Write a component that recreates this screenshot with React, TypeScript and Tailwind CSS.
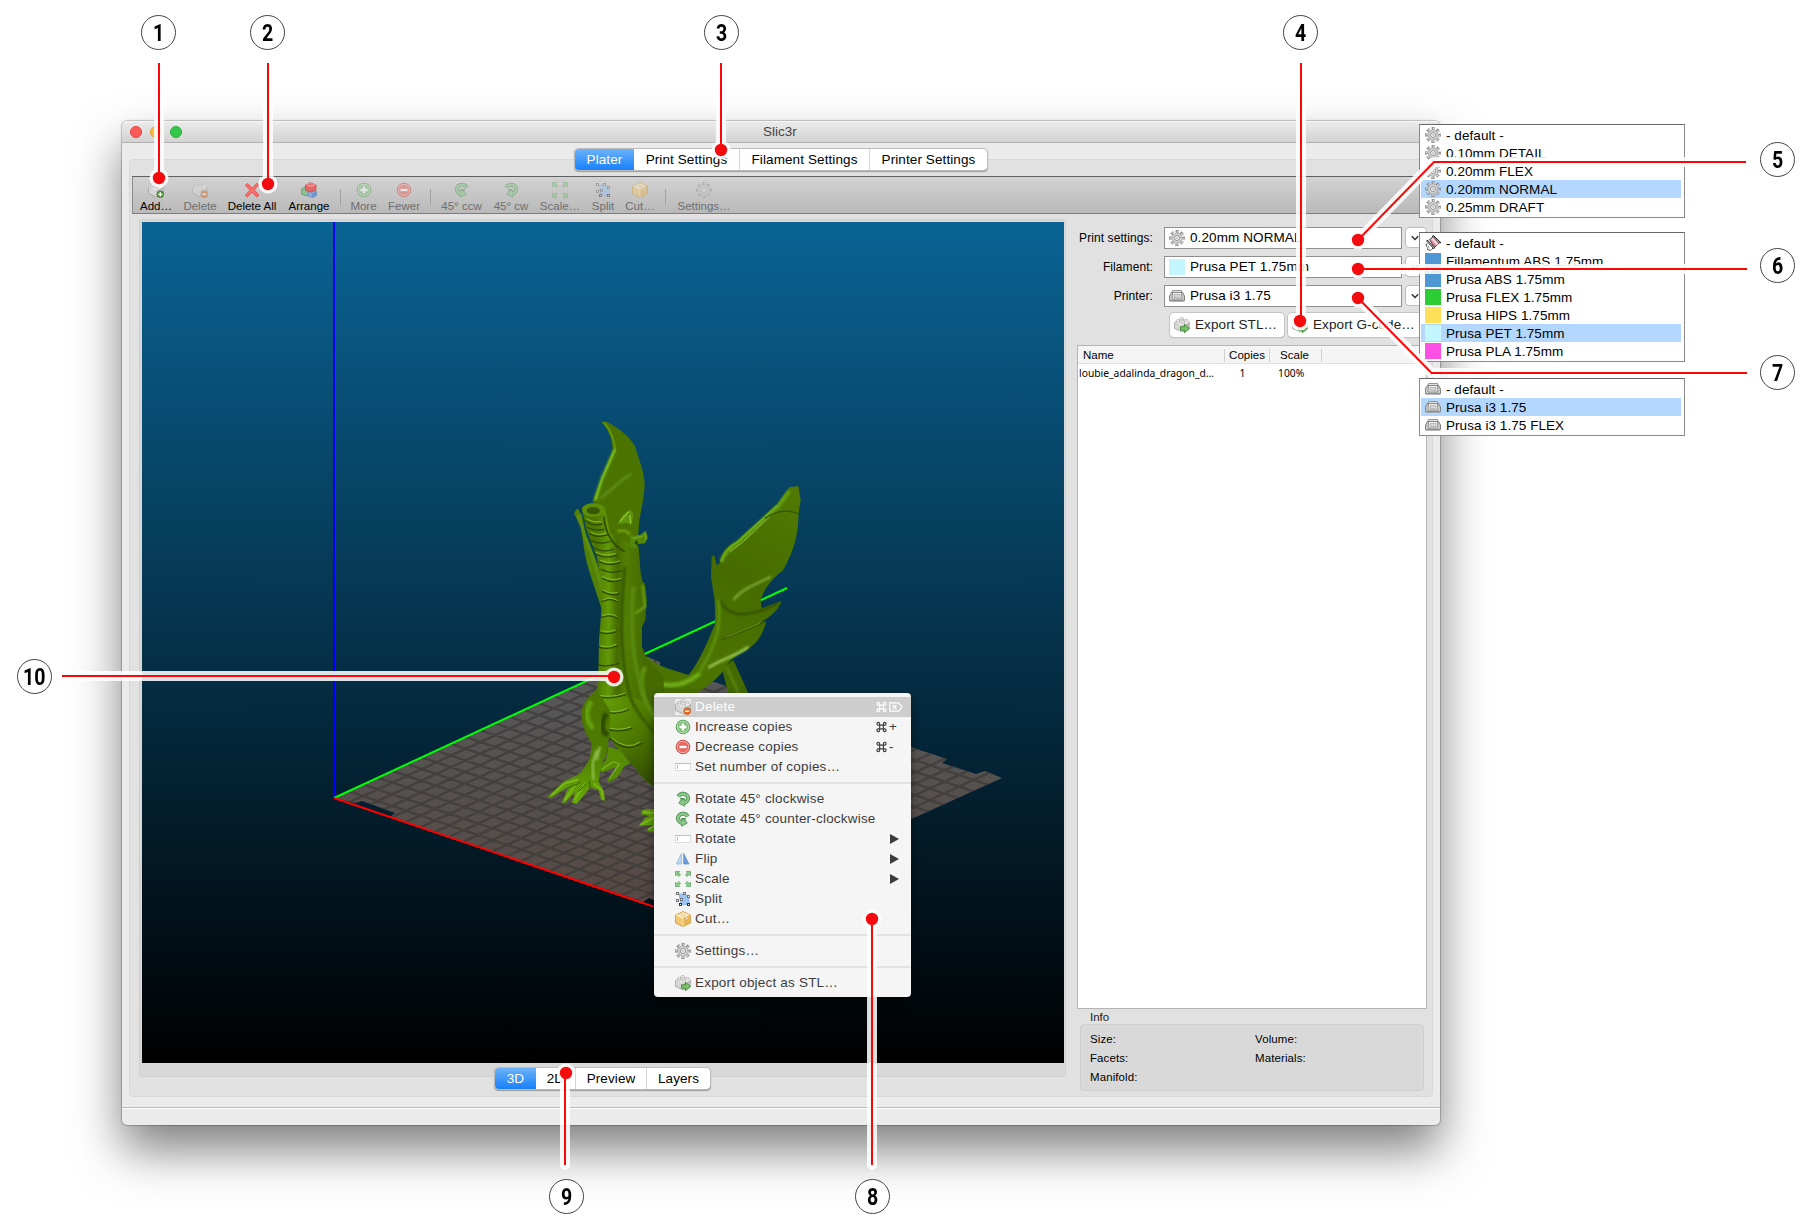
import React from "react";

type IconProps = { className?: string };

const Brick = ({
  top = "#f6f6f6",
  left = "#d6d6d6",
  right = "#bcbcbc",
  badge,
  className = "",
}: {
  top?: string;
  left?: string;
  right?: string;
  badge?: "plus" | "minus" | "arrow";
  className?: string;
}) => (
  <svg viewBox="0 0 16 16" className={"block size-4 shrink-0 " + className}>
    <path d="M0.5 5.5 L6 2.8 L15.5 5 L15.5 11.5 L8.5 15 L0.5 11.5Z" fill={left} stroke="#9a9a9a" strokeWidth=".7" />
    <path d="M8.5 8.2 L15.5 5 L15.5 11.5 L8.5 15Z" fill={right} />
    <path d="M0.5 5.3 L7 2 L15.5 5 L8.5 8.2Z" fill={top} />
    <g fill={top} stroke="#a5a5a5" strokeWidth=".6">
      <path d="M2.2 3.6v1.6c0 1.3 3.6 1.3 3.6 0V3.6z" />
      <ellipse cx="4" cy="3.5" rx="1.8" ry="1" />
      <path d="M6 1.6v1.6c0 1.3 3.6 1.3 3.6 0V1.6z" />
      <ellipse cx="7.8" cy="1.5" rx="1.8" ry="1" />
      <path d="M7 4.6v1.6c0 1.3 3.6 1.3 3.6 0V4.6z" />
      <ellipse cx="8.8" cy="4.6" rx="1.8" ry="1" />
      <ellipse cx="12.3" cy="3.3" rx="1.8" ry="1" />
    </g>
    {badge === "plus" && (
      <g>
        <circle cx="12.3" cy="12.3" r="3.4" fill="#4f9a33" stroke="#34721f" strokeWidth=".6" />
        <path d="M10.2 12.3h4.2M12.3 10.2v4.2" stroke="#fff" strokeWidth="1.3" />
      </g>
    )}
    {badge === "minus" && (
      <g>
        <circle cx="12.3" cy="12.3" r="3.4" fill="#e0702c" stroke="#b9501a" strokeWidth=".6" />
        <path d="M10.2 12.3h4.2" stroke="#fff" strokeWidth="1.3" />
      </g>
    )}
    {badge === "arrow" && (
      <path d="M6.5 9.8h4V7.3l5 4.2-5 4.2v-2.4h-4z" fill="#7cc068" stroke="#3f8a35" strokeWidth=".9" />
    )}
  </svg>
);

const Arrange = () => (
  <svg viewBox="0 0 16 16" className="block size-4">
    <path d="M0.5 7 L4 5 L8 7 V12.5 L4.5 14 L0.5 12Z" fill="#8dbd90" stroke="#5a9a64" strokeWidth=".7" />
    <path d="M7 9.5 L11 7.8 L15.5 9.5 V13.5 L11 15.7 L7 13.8Z" fill="#8db0dd" stroke="#5c84b8" strokeWidth=".7" />
    <path d="M11 11.5l4.5-2v4L11 15.7z" fill="#6d95ca" />
    <path d="M4.5 3 L10 1.2 L15 3 V8 L10 10.3 L4.5 8Z" fill="#e66868" stroke="#ba4444" strokeWidth=".7" />
    <path d="M4.5 3L10 1.2 15 3 10 5z" fill="#f49a9a" />
    <ellipse cx="9.8" cy="1.9" rx="2.2" ry="1.2" fill="#f28a8a" stroke="#c95050" strokeWidth=".5" />
  </svg>
);

const Cross = () => (
  <svg viewBox="0 0 16 16" className="block size-4">
    <path d="M3.5 3.5L13 13M12.8 3.2L3.3 13.2" stroke="#e04848" strokeWidth="3.4" strokeLinecap="square" />
    <path d="M3.5 3.5L13 13M12.8 3.2L3.3 13.2" stroke="#fb706a" strokeWidth="2.2" strokeLinecap="square" />
  </svg>
);

const PlusCircle = () => (
  <svg viewBox="0 0 16 16" className="block size-4">
    <circle cx="8" cy="8" r="6.8" fill="#7fbf79" stroke="#4b9a4b" strokeWidth=".9" />
    <circle cx="8" cy="8" r="5.7" fill="none" stroke="#c5e6c0" strokeWidth=".9" />
    <path d="M4.4 8h7.2M8 4.4v7.2" stroke="#fff" strokeWidth="2.4" />
  </svg>
);

const MinusCircle = () => (
  <svg viewBox="0 0 16 16" className="block size-4">
    <circle cx="8" cy="8" r="6.8" fill="#e8685f" stroke="#c4403a" strokeWidth=".9" />
    <circle cx="8" cy="8" r="5.7" fill="none" stroke="#f7b7b0" strokeWidth=".9" />
    <path d="M4.4 8h7.2" stroke="#fff" strokeWidth="2.4" />
  </svg>
);

const RotateCw = ({ className = "" }: IconProps) => (
  <svg viewBox="0 0 16 16" className={"block size-4 " + className}>
    <path d="M3.4 5.6A5 4.6 0 1 1 9 11.8" fill="none" stroke="#4c9150" strokeWidth="4" />
    <path d="M9.6 7.6v7.6L3.8 12.2 5.4 9.6z" fill="#8cc58b" stroke="#4c9150" strokeWidth=".8" />
    <path d="M3.4 5.6A5 4.6 0 1 1 9 11.8" fill="none" stroke="#8cc58b" strokeWidth="2.5" />
    <path d="M5.2 7.8h3.6" stroke="#4c9150" strokeWidth="1.6" />
  </svg>
);

const ScaleIcon = () => (
  <svg viewBox="0 0 16 16" className="block size-4" fill="#8bc98a" stroke="#58a45c" strokeWidth=".7">
    <path d="M.5.5h4.3L3.6 1.7 5.6 3.7 3.8 5.5 1.8 3.5.5 4.8z" />
    <path d="M.5.5h4.3L3.6 1.7 5.6 3.7 3.8 5.5 1.8 3.5.5 4.8z" transform="matrix(-1 0 0 1 16 0)" />
    <path d="M.5.5h4.3L3.6 1.7 5.6 3.7 3.8 5.5 1.8 3.5.5 4.8z" transform="matrix(1 0 0 -1 0 16)" />
    <path d="M.5.5h4.3L3.6 1.7 5.6 3.7 3.8 5.5 1.8 3.5.5 4.8z" transform="matrix(-1 0 0 -1 16 16)" />
  </svg>
);

const SplitIcon = () => (
  <svg viewBox="0 0 16 16" className="block size-4">
    <path d="M4 3h6l4 3v7.500H6z" fill="#9cc3f2" stroke="#7aa7df" strokeWidth=".7" />
    <g fill="#fff" stroke="#666" strokeWidth=".9">
      <rect x="1.500" y="1.500" width="2" height="2" />
      <rect x="8.500" y="1.500" width="2" height="2" />
      <rect x="12.500" y="4.500" width="2" height="2" />
      <rect x="1.500" y="8.500" width="2" height="2" />
      <rect x="5.500" y="7.500" width="2" height="2" />
      <rect x="4.500" y="12.500" width="2" height="2" stroke="#222" />
      <rect x="12.500" y="12.500" width="2" height="2" stroke="#222" />
    </g>
  </svg>
);

const Box = () => (
  <svg viewBox="0 0 16 16" className="block size-4">
    <path d="M8 .6L15.400 4v8L8 15.500.6 12V4z" fill="#f3c873" stroke="#cb973e" strokeWidth=".9" />
    <path d="M8 .9L15 4 8 7.300 1 4z" fill="#fde9b5" />
    <path d="M8 7.300L15 4v7.800L8 15.200z" fill="#e9b455" />
    <path d="M3.500 2.900l7.500 3.300v3l1.500-.7v-3L5.200 2.200z" fill="#f9f3df" stroke="#c9a35a" strokeWidth=".4" />
    <path d="M1 4l7 3.300v8" fill="none" stroke="#fff3cf" strokeWidth=".7" />
  </svg>
);

const Gear = () => (
  <svg viewBox="0 0 16 16" className="block size-4 shrink-0">
    <circle cx="8" cy="8" r="6.600" fill="none" stroke="#8a8a8a" strokeWidth="2.600" strokeDasharray="3.200 1.984" strokeDashoffset="1.600" />
    <circle cx="8" cy="8" r="6.200" fill="none" stroke="#cdcdcd" strokeWidth="2" strokeDasharray="1.900 2.970" strokeDashoffset=".95" />
    <circle cx="8" cy="8" r="5.100" fill="#cbcbcb" stroke="#979797" strokeWidth=".7" />
    <circle cx="8" cy="8" r="4.400" fill="#d0d0d0" />
    <circle cx="8" cy="8" r="2.500" fill="#f4f4f4" stroke="#8f8f8f" strokeWidth=".9" />
    <circle cx="8" cy="8" r="1.100" fill="#c4c4c4" />
  </svg>
);

const Printer = () => (
  <svg viewBox="0 0 16 16" className="block size-4 shrink-0">
    <path d="M3.500 2.500h9l1.500 3.500H2z" fill="#e2e2e2" stroke="#8a8a8a" strokeWidth=".9" />
    <path d="M2.500 4.500h11l2 3.500v4.500H.5V8z" fill="#cfcfcf" stroke="#777" strokeWidth=".9" />
    <path d="M3.500 4.500h9l.5 6.500H3z" fill="#f3f3f3" stroke="#777" strokeWidth=".8" />
    <path d="M5 6.500h6v3H5z" fill="#d6d6d6" stroke="#999" strokeWidth=".6" />
    <path d="M.6 12.500h14.800v1.200H.6z" fill="#999" />
  </svg>
);

const Spool = () => (
  <svg viewBox="0 0 16 16" className="block size-4 shrink-0">
    <path d="M4.500 4.500L9 1l5.500 6.500-5 5z" fill="#e58aa0" stroke="#222" strokeWidth=".8" />
    <path d="M7 3.500l5.500 6" stroke="#fbd3dc" strokeWidth="2.200" />
    <path d="M7.500.7l8 7.300M1.800 5.300l7.500 8.200" stroke="#111" strokeWidth="1.800" />
    <path d="M7.800 1.400l7 6.200M2.300 6l6.600 6.900" stroke="#fff" strokeWidth=".7" />
    <path d="M2 8.500L.8 10.500l2.500 1.200-.8 3 3.500.6 2-2.300" fill="none" stroke="#111" strokeDasharray="1.500 .8" />
  </svg>
);

const Field = () => (
  <svg viewBox="0 0 16 16" className="block size-4">
    <path d="M.5 4.500h15v7H.5z" fill="#fff" stroke="#dcdcdc" />
    <path d="M0 4.500h16" stroke="#bfbfbf" />
    <path d="M2.500 6v4" stroke="#bbb" />
  </svg>
);

const FlipIcon = () => (
  <svg viewBox="0 0 16 16" className="block size-4">
    <path d="M6.500 2.500v10.500H1.300z" fill="#bcd5f0" stroke="#93b6de" strokeWidth=".7" />
    <path d="M8.700 2.500v10.500h5.200z" fill="#6c9ed9" stroke="#5286c6" strokeWidth=".7" />
  </svg>
);

const ForwardDelete = () => (
  <svg viewBox="0 0 14 10" className="h-[10px] w-[14px]" fill="none" stroke="#fff" strokeWidth="1.200">
    <path d="M.8.8h8.700L13.200 5 9.500 9.200H.8zM3.500 3l4 4M7.500 3l-4 4" />
  </svg>
);

function Segmented({ items }: { items: { label: string; w: string }[] }) {
  return (
    <div className="flex h-[21px] overflow-hidden rounded-[4px] bg-white text-[13.5px] leading-[21px] tracking-[0.1px] text-black shadow-[0_0_0_1px_#bdbdbd,0_1px_1px_0.5px_#999]">
      {items.map((it, i) => (
        <div
          key={it.label}
          className={
            it.w +
            " text-center " +
            (i === 0
              ? "bg-linear-to-b/srgb from-[#6cb3fa] to-[#1680fb] text-white"
              : i > 1
                ? "border-l border-[#d5d5d5]"
                : "")
          }
        >
          {it.label}
        </div>
      ))}
    </div>
  );
}

function Tool({ w, label, off, children }: { w: string; label: string; off?: boolean; children: React.ReactNode }) {
  return (
    <div className={w + " flex shrink-0 flex-col items-center pt-[5px]"}>
      <div className={off ? "opacity-50" : ""}>{children}</div>
      <div className={"mt-px text-[11.5px] leading-[14px] whitespace-nowrap " + (off ? "text-[#6e6e6e]" : "text-black")}>
        {label}
      </div>
    </div>
  );
}

const ToolSep = () => <div className="mt-3 h-4 w-px bg-[#a2a2a2]" />;

function Combo({ label, text, icon }: { label: string; text: string; icon: React.ReactNode }) {
  return (
    <div className="flex h-[29px] items-start">
      <div className="w-[85px] pt-[3px] text-right text-[12px] leading-[17px] tracking-[0.08px]">{label}</div>
      <div className="ml-[11px] flex h-[22px] w-[238px] items-center border border-[#8f8f8f] bg-white pl-1 text-[13.5px] tracking-[0.1px]">
        {icon}
        <span className="ml-[5px] pt-px">{text}</span>
      </div>
      <div className="ml-[3px] flex h-[21px] w-[22px] items-center rounded-[4px] border border-[#bdbdbd] bg-white pl-[5px]">
        <svg viewBox="0 0 8 6" className="h-[6px] w-2" fill="none" stroke="#333" strokeWidth="1.500">
          <path d="M.8 1.200L4 4.500 7.200 1.200" />
        </svg>
      </div>
    </div>
  );
}

const Swatch = ({ c }: { c: string }) => <div className={"size-4 shrink-0 " + c} />;

function Popup({ top, rows }: { top: string; rows: { icon: React.ReactNode; text: string; on?: boolean }[] }) {
  return (
    <div
      className={
        top + " absolute left-[1419px] w-[266px] border border-t-[#666] border-r-[#8a8a8a] border-b-[#8a8a8a] border-l-[#8a8a8a] bg-white py-px pr-[3px] pl-px"
      }
    >
      {rows.map((r) => (
        <div key={r.text} className={"flex h-[18px] items-center pl-1 text-[13.5px] tracking-[0.06px] " + (r.on ? "bg-[#b3d7ff]" : "")}>
          {r.icon}
          <span className="ml-[5px] pt-[2px] leading-4">{r.text}</span>
        </div>
      ))}
    </div>
  );
}

function MenuItem({
  icon,
  text,
  keys,
  sub,
  on,
}: {
  icon: React.ReactNode;
  text: string;
  keys?: React.ReactNode;
  sub?: boolean;
  on?: boolean;
}) {
  return (
    <div className={"flex h-5 items-center pl-[21px] " + (on ? "bg-[#cdcdcd] text-white" : "text-[#3c3c3c]")}>
      {icon}
      <span className="ml-1 flex-1 whitespace-nowrap">{text}</span>
      {keys && <span className="flex w-[35px] items-center">{keys}</span>}
      {sub && (
        <svg viewBox="0 0 9 10" className="mr-3 h-[10px] w-[9px]">
          <path d="M0 0L9 5 0 10z" fill="#3c3c3c" />
        </svg>
      )}
    </div>
  );
}

const MenuSep = () => (
  <div className="flex h-3 items-center">
    <div className="h-[2px] w-full bg-[#e2e2e2]" />
  </div>
);

const Cmd = () => (
  <svg viewBox="0 0 12 12" className="mr-[2px] h-[12px] w-[11px]" fill="none" stroke="currentColor" strokeWidth="1.200">
    <path d="M4 4h4v4H4zM4 4H2.500A1.500 1.500 0 1 1 4 2.500zM8 4V2.500A1.500 1.500 0 1 1 9.500 4zM8 8h1.500A1.500 1.500 0 1 1 8 9.500zM4 8v1.500A1.500 1.500 0 1 1 2.500 8z" />
  </svg>
);

const lerp = (a: number, b: number, t: number) => a + (b - a) * t;
const O = [334, 798];
const RX = [693, 920];
const GY = [642, 656];
const FAR = [1003, 778];

function Bed() {
  const lines: string[] = [];
  for (let i = 1; i < 25; i++) {
    const t = i / 25;
    lines.push(
      `M${lerp(O[0], RX[0], t).toFixed(1)} ${lerp(O[1], RX[1], t).toFixed(1)}L${lerp(GY[0], FAR[0], t).toFixed(1)} ${lerp(GY[1], FAR[1], t).toFixed(1)}`
    );
  }
  for (let i = 1; i < 21; i++) {
    const t = i / 21;
    lines.push(
      `M${lerp(O[0], GY[0], t).toFixed(1)} ${lerp(O[1], GY[1], t).toFixed(1)}L${lerp(RX[0], FAR[0], t).toFixed(1)} ${lerp(RX[1], FAR[1], t).toFixed(1)}`
    );
  }
  const outline =
    "M334 798L355 803 362 801 395 813 390 817 643 902 649 898 693 918 1002 778 985 771 976 774 942 763 947 759 705 679 685 680 660 668 660 662 648 657 640 657Z";
  return (
    <g>
      <defs>
        <linearGradient id="bed" x1="0" y1="656" x2="0" y2="920" gradientUnits="userSpaceOnUse">
          <stop offset="0" stopColor="#58595b" />
          <stop offset=".55" stopColor="#55504d" />
          <stop offset="1" stopColor="#574742" />
        </linearGradient>
        <clipPath id="bedClip">
          <path d={outline} />
        </clipPath>
      </defs>
      <path d={outline} fill="url(#bed)" />
      <path d={lines.join("")} stroke="#3d3b3a" strokeOpacity=".75" strokeWidth="2.400" clipPath="url(#bedClip)" />
    </g>
  );
}

function Dragon() {
  return (
    <g transform="translate(530 400) scale(.33333)">
      <defs>
        <linearGradient id="neck" x1="200" x2="345" y1="0" y2="0" gradientUnits="userSpaceOnUse">
          <stop offset="0" stopColor="#4d7800" />
          <stop offset=".25" stopColor="#629a08" />
          <stop offset=".42" stopColor="#456b00" />
          <stop offset=".6" stopColor="#517e04" />
          <stop offset="1" stopColor="#446a00" />
        </linearGradient>
        <linearGradient id="wing" x1="560" x2="810" y1="800" y2="300" gradientUnits="userSpaceOnUse">
          <stop offset="0" stopColor="#4b7302" />
          <stop offset=".5" stopColor="#466c00" />
          <stop offset="1" stopColor="#4f7903" />
        </linearGradient>
        <radialGradient id="belly" cx="210" cy="900" r="290" gradientUnits="userSpaceOnUse">
          <stop offset="0" stopColor="#66a008" />
          <stop offset=".55" stopColor="#4b7600" />
          <stop offset="1" stopColor="#304a00" />
        </radialGradient>
        <linearGradient id="limb" x1="0" x2="0" y1="900" y2="1210" gradientUnits="userSpaceOnUse">
          <stop offset="0" stopColor="#4c7600" />
          <stop offset=".5" stopColor="#4e7c00" />
          <stop offset="1" stopColor="#67a808" />
        </linearGradient>
        <filter id="soft" x="-20%" y="-20%" width="140%" height="140%">
          <feGaussianBlur stdDeviation="3.500" />
        </filter>
      </defs>

      {/* far wing */}
      <path
        d="M213 64L232 66C262 82 298 108 316 140 322 170 344 210 344 255 342 310 326 350 326 390L322 440 240 420 215 320 187 305 212 240 248 150C246 115 236 90 213 64Z"
        fill="#4a7300"
      />
      <path d="M222 68C242 90 252 118 256 148" fill="none" stroke="#629a0f" strokeWidth="5" />
      <path d="M255 148L216 236 196 300" fill="none" stroke="#72b01a" strokeWidth="9" filter="url(#soft)" />
      <path d="M256 148L216 236 196 300" fill="none" stroke="#79bb1c" strokeWidth="4" />
      <path d="M210 295C250 270 265 240 305 222" fill="none" stroke="#5a8a12" strokeWidth="10" filter="url(#soft)" />

      {/* strip left of the throat */}
      <path d="M132 340L142 325 156 345 166 400 190 460 217 530 217 635C200 575 168 500 162 445L152 380Z" fill="#527f06" />
      <path d="M145 345C165 420 205 500 214 570" fill="none" stroke="#6b9f1c" strokeWidth="5" filter="url(#soft)" />

      {/* tail */}
      <path d="M575 805L610 780 660 890 598 890Z" fill="#446a02" />
      <path d="M590 800L628 885" stroke="#568409" strokeWidth="8" filter="url(#soft)" />

      {/* near wing */}
      <path
        d="M778 262L805 258 812 300 806 340C804 400 796 445 760 510 722 540 702 568 692 600L695 625 755 604C740 640 712 654 692 668L708 664C698 712 672 738 640 755 615 768 595 782 580 812 560 840 525 862 495 884L370 890 345 850 345 765C385 802 410 803 475 825 500 800 530 735 556 670L554 600 543 530 545 470 552 465 560 495 569 490C575 452 598 432 620 425L740 315Z"
        fill="url(#wing)"
      />
      <path d="M574 484C584 455 605 440 625 428L745 318 778 274" fill="none" stroke="#64a010" strokeWidth="11" filter="url(#soft)" />
      <path d="M573 486C582 453 603 436 623 425L742 316" fill="none" stroke="#6dad14" strokeWidth="5" />
      <path d="M600 455L640 425 728 340" fill="none" stroke="#8cbb40" strokeWidth="3" />
      <path d="M806 342C770 325 735 335 705 355" fill="none" stroke="#365500" strokeWidth="4" />
      <path d="M610 600C640 560 690 550 722 530" fill="none" stroke="#86b13d" strokeWidth="6" filter="url(#soft)" />
      <path d="M568 600C600 660 660 650 745 610" fill="none" stroke="#304c00" strokeWidth="6" filter="url(#soft)" />
      <path d="M575 720C620 700 670 685 700 668" fill="none" stroke="#375600" strokeWidth="4" />
      <path d="M590 712C630 694 660 684 690 670" fill="none" stroke="#5f8c1c" strokeWidth="3" />
      <path d="M535 803C580 775 625 765 655 740" fill="none" stroke="#9acb52" strokeWidth="8" filter="url(#soft)" />
      <path d="M565 600C575 680 560 730 510 815" fill="none" stroke="#5c9109" strokeWidth="9" filter="url(#soft)" />
      <path d="M365 840C410 865 460 860 510 820" fill="none" stroke="#6caa12" strokeWidth="14" filter="url(#soft)" />

      {/* neck and chest */}
      <path
        d="M326 440L332 520 338 545 344 550 350 600 346 660 336 680 336 740 350 775 400 830 420 1200 372 1160C340 1145 300 1080 275 1060L235 1010 185 1030C165 1000 152 960 156 935 160 905 185 885 200 870L205 830 207 720 215 620 215 540 200 470 170 390 155 325C165 305 215 305 225 325L240 400Z"
        fill="url(#neck)"
      />
      <path d="M197 900C240 890 290 880 330 900L400 940 400 1175 372 1160C335 1140 300 1080 275 1060L235 1010 215 1010Z" fill="url(#belly)" />
      <path d="M345 800C320 860 340 900 380 960" fill="none" stroke="#5d900f" strokeWidth="14" filter="url(#soft)" />
      <path d="M285 500C270 650 268 760 300 890 315 930 340 960 375 1000" fill="none" stroke="#375600" strokeWidth="8" filter="url(#soft)" />
      <path d="M310 560C300 680 305 780 340 880" fill="none" stroke="#588708" strokeWidth="14" filter="url(#soft)" />
      <path d="M338 555L345 620 315 640" fill="none" stroke="#6fa81b" strokeWidth="6" filter="url(#soft)" />

      {/* jaw opening and crest */}
      <ellipse cx="190" cy="330" rx="34" ry="20" fill="#5d9008" />
      <ellipse cx="190" cy="332" rx="20" ry="11" fill="#385700" />
      <path d="M222 350C225 400 250 440 285 455" fill="none" stroke="#304b00" strokeWidth="5" />
      <path d="M262 372L278 345 300 328 310 342 305 375 290 368Z" fill="#5f9410" />
      <path d="M270 365L296 335M300 345L302 370" stroke="#8fc636" strokeWidth="4" />
      <path d="M262 395C280 385 295 395 300 405" stroke="#69a012" strokeWidth="9" fill="none" filter="url(#soft)" />
      <path d="M298 408L330 405 347 392 354 412 345 430 325 432 318 446 302 442Z" fill="#558709" />
      <path d="M305 415L340 408M345 398L348 420" stroke="#78ae22" strokeWidth="3" />
      <path d="M312 428L322 420 326 440Z" fill="#2f4800" />

      {/* throat plates */}
      <g fill="none" stroke="#2f4a00" strokeWidth="4" strokeLinecap="round">
        <path d="M166 362Q190 380 216 372M172 382Q195 395 222 388M178 402Q205 415 232 405M184 422Q210 435 240 425M190 442Q215 460 250 448M198 462Q225 478 260 466M208 486Q235 500 272 488M214 508Q240 524 276 512M218 535Q245 552 276 540M218 575Q245 590 268 582" />
        <path d="M216 605Q240 592 264 606M214 652Q240 642 262 654M210 698Q235 705 260 695M208 742Q235 750 262 738M206 795Q235 802 266 790M202 890Q240 900 286 884M206 930Q250 950 296 930M225 985Q265 1000 306 985M240 1015Q285 1060 336 1030" />
      </g>
      <g fill="none" stroke="#83bf2c" strokeWidth="3" strokeLinecap="round">
        <path d="M170 357Q192 370 214 366M184 397Q205 408 228 400M198 457Q225 471 256 461M212 481Q238 494 268 483M216 530Q245 546 272 535M220 570Q240 584 262 577" />
        <path d="M220 600Q240 587 262 601M218 647Q240 637 260 649M214 693Q235 699 256 690M212 737Q235 745 258 733M208 886Q245 894 284 880M212 926Q250 944 290 926M228 981Q265 995 302 981M246 1014Q290 1054 330 1026" />
      </g>

      {/* back foot */}
      <path d="M235 1040L228 1080 205 1105 215 1118 255 1102 255 1115 230 1140 236 1147 262 1132 282 1100 300 1090 270 1050Z" fill="#568c04" />
      <path d="M215 1108L250 1085 268 1092 238 1135" fill="none" stroke="#78b022" strokeWidth="4" />

      {/* front leg and foot */}
      <path
        d="M200 870C180 885 155 910 154 940 155 985 175 1010 186 1022L180 1075 158 1110 152 1118C120 1140 100 1140 90 1155L54 1190 62 1193 108 1165 116 1160 96 1208 104 1208 136 1175 126 1208 140 1211 168 1178 182 1162 205 1170 214 1200 225 1202 222 1175 206 1145 212 1100 230 1060 238 1005 240 930Z"
        fill="url(#limb)"
      />
      <path d="M185 905C165 930 165 960 190 985" fill="none" stroke="#659f0c" strokeWidth="16" filter="url(#soft)" />
      <path d="M230 940C210 970 215 1000 235 1005" fill="none" stroke="#2f4b00" strokeWidth="16" filter="url(#soft)" />
      <path d="M200 1050L188 1090 190 1140M210 1040L200 1080" fill="none" stroke="#98c95a" strokeWidth="6" filter="url(#soft)" />
      <path d="M64 1186L105 1150 145 1138M104 1200L140 1150M134 1200L165 1150M190 1150L215 1170 220 1195" fill="none" stroke="#7abb18" strokeWidth="5" />
      <path d="M112 1165L150 1148M145 1175L168 1152M180 1165L178 1145" fill="none" stroke="#355500" strokeWidth="3" />

      {/* hind claws */}
      <path d="M334 1232L345 1228 380 1228 400 1300 350 1293 368 1275 325 1278 345 1255 360 1248 334 1243Z" fill="#5f9c06" />
      <path d="M340 1236L380 1240M332 1274L375 1252M354 1288L380 1275" stroke="#84bf2c" strokeWidth="4" />
    </g>
  );
}

const Viewport = () => (
  <svg viewBox="142 222 922 841" className="block h-[841px] w-[922px] bg-linear-to-b/srgb from-[#0a6394] to-black">
    <path d="M334 222V798" stroke="#0000ff" strokeWidth="2" />
    <Bed />
    <path d="M334 798L787 588" stroke="#00ff00" strokeWidth="2" />
    <path d="M334 798L693 920" stroke="#ff0000" strokeWidth="2" />
    <Dragon />
  </svg>
);

const leaders = [
  { d: "M159 63V178", x: 159, y: 178 },
  { d: "M268 63V184", x: 268, y: 184 },
  { d: "M721 63V150", x: 721, y: 150 },
  { d: "M1301 63V321", x: 1300, y: 321 },
  { d: "M1746 162H1434L1358 240", x: 1358, y: 240 },
  { d: "M1747 269H1358", x: 1358, y: 269 },
  { d: "M1747 373H1431.500L1358 298", x: 1358, y: 298 },
  { d: "M872 1165V919", x: 872, y: 919 },
  { d: "M565 1165V1073", x: 566, y: 1073 },
  { d: "M62 676H614", x: 614, y: 677 },
];

const Leaders = () => (
  <svg viewBox="0 0 1810 1230" className="pointer-events-none absolute inset-0 h-[1230px] w-[1810px]">
    <defs>
      <filter id="halo" x="0" y="0" width="1810" height="1230" filterUnits="userSpaceOnUse">
        <feGaussianBlur stdDeviation=".7" />
      </filter>
    </defs>
    <g opacity=".87" filter="url(#halo)" fill="none" stroke="#fff" strokeWidth="10" strokeLinecap="round" strokeLinejoin="round">
      {leaders.map((l) => (
        <g key={l.d}>
          <path d={l.d} />
          <circle cx={l.x} cy={l.y} r="9.500" fill="#fff" stroke="none" />
        </g>
      ))}
    </g>
    {leaders.map((l) => (
      <g key={l.d}>
        <path d={l.d} fill="none" stroke="#f90808" strokeWidth="2" />
        <circle cx={l.x} cy={l.y} r="6.200" fill="#f40b0e" />
      </g>
    ))}
  </svg>
);

const badges = [
  { n: "1", at: "left-[141px] top-[15px]" },
  { n: "2", at: "left-[250px] top-[15px]" },
  { n: "3", at: "left-[704px] top-[15px]" },
  { n: "4", at: "left-[1283px] top-[15px]" },
  { n: "5", at: "left-[1760px] top-[142px]" },
  { n: "6", at: "left-[1760px] top-[248px]" },
  { n: "7", at: "left-[1760px] top-[355px]" },
  { n: "8", at: "left-[855px] top-[1179px]" },
  { n: "9", at: "left-[549px] top-[1179px]" },
  { n: "10", at: "left-[17px] top-[659px]" },
];

export default function App() {
  return (
    <div className="relative h-[1230px] w-[1810px] overflow-hidden bg-white pt-[121px] pl-[122px] font-['Liberation_Sans',Arial,sans-serif] text-black">
      {/* application window */}
      <div className="flex h-[1004px] w-[1318px] flex-col overflow-hidden rounded-[5px] bg-[#ebebeb] shadow-[0_0_1px_1px_rgba(0,0,0,0.22),0_25px_48px_rgba(0,0,0,0.5)]">
        <div className="flex h-[22px] shrink-0 items-center border-b border-[#b1b1b1] bg-linear-to-b/srgb from-[#ececec] to-[#d3d3d3] pl-2 shadow-[inset_0_1px_0_#f6f6f6]">
          <div className="flex w-[60px] gap-2">
            <div className="size-3 rounded-full border border-[#e2443f] bg-[#fc5b57]" />
            <div className="size-3 rounded-full border border-[#dfa023] bg-[#fdbc40]" />
            <div className="size-3 rounded-full border border-[#2cae36] bg-[#34c84a]" />
          </div>
          <div className="flex-1 pt-px pr-[70px] text-center text-[13.5px] leading-5 text-[#444]">Slic3r</div>
        </div>

        <div className="mt-[16px] ml-[7px] flex h-[938px] w-[1304px] shrink-0 flex-col rounded-[4px] border border-[#d8d8d8] bg-[#e1e1e1]">
          <div className="-mt-[11px] ml-[445px] flex">
            <Segmented
              items={[
                { label: "Plater", w: "w-[59px]" },
                { label: "Print Settings", w: "w-[105px]" },
                { label: "Filament Settings", w: "w-[130px]" },
                { label: "Printer Settings", w: "w-[118px]" },
              ]}
            />
          </div>

          <div className="mt-[6px] ml-[2px] flex h-[38px] w-[1298px] shrink-0 border border-t-[#5f5f5f] border-r-[#8a8a8a] border-b-[#7c7c7c] border-l-[#8a8a8a] bg-linear-to-b/srgb from-[#d2d2d2] to-[#b9b9b9] pl-px">
            <Tool w="w-[44px]" label="Add…"><Brick badge="plus" /></Tool>
            <Tool w="w-[44px]" label="Delete" off><Brick badge="minus" /></Tool>
            <Tool w="w-[60px]" label="Delete All"><Cross /></Tool>
            <Tool w="w-[54px]" label="Arrange"><Arrange /></Tool>
            <div className="flex w-2 justify-center"><ToolSep /></div>
            <Tool w="w-[39px]" label="More" off><PlusCircle /></Tool>
            <Tool w="w-[42px]" label="Fewer" off><MinusCircle /></Tool>
            <div className="flex w-[10px] justify-center"><ToolSep /></div>
            <Tool w="w-[53px]" label="45° ccw" off><RotateCw className="-scale-x-100" /></Tool>
            <Tool w="w-[46px]" label="45° cw" off><RotateCw /></Tool>
            <Tool w="w-[52px]" label="Scale…" off><ScaleIcon /></Tool>
            <Tool w="w-[34px]" label="Split" off><SplitIcon /></Tool>
            <Tool w="w-[40px]" label="Cut…" off><Box /></Tool>
            <div className="flex w-[11px] justify-center"><ToolSep /></div>
            <Tool w="w-[66px]" label="Settings…" off><Gear /></Tool>
          </div>

          <div className="mt-[5px] ml-[9px] flex">
            <div className="h-[858px] w-[927px] shrink-0 rounded-[4px] border border-[#cfcfcf] bg-[#d8d8d8] pt-[2px] pl-[2px]">
              <Viewport />
              <div className="mt-[5px] ml-[353px] flex">
                <Segmented
                  items={[
                    { label: "3D", w: "w-[41px]" },
                    { label: "2D", w: "w-[39px]" },
                    { label: "Preview", w: "w-[71px]" },
                    { label: "Layers", w: "w-[64px]" },
                  ]}
                />
              </div>
            </div>

            <div className="ml-[2px] flex w-[364px] flex-col pt-2">
              <Combo label="Print settings:" text="0.20mm NORMAL" icon={<Gear />} />
              <Combo label="Filament:" text="Prusa PET 1.75mm" icon={<Swatch c="bg-[#c3f6ff]" />} />
              <Combo label="Printer:" text="Prusa i3 1.75" icon={<Printer />} />
              <div className="-mt-px ml-[102px] flex gap-1 text-[13.5px] tracking-[0.1px] text-[#222]">
                <div className="flex h-[24px] w-[114px] items-center rounded-[4px] bg-white pl-1 shadow-[0_0_0_1px_#c4c4c4,0_1px_1px_#999]">
                  <Brick badge="arrow" />
                  <span className="ml-[5px]">Export STL…</span>
                </div>
                <div className="flex h-[24px] w-[140px] items-center rounded-[4px] bg-white pl-1 whitespace-nowrap shadow-[0_0_0_1px_#c4c4c4,0_1px_1px_#999]">
                  <Brick badge="arrow" />
                  <span className="ml-[5px]">Export G-code…</span>
                </div>
              </div>

              <div className="mt-2 ml-[9px] h-[664px] w-[350px] border border-[#b5b5b5] bg-white">
                <div className="flex h-[18px] items-end border-b border-[#e0e0e0] bg-[#f5f5f5] pb-px text-[11.5px] leading-[13px]">
                  <div className="w-[147px] border-r border-[#d0d0d0] pl-[5px]">Name</div>
                  <div className="w-[45px] border-r border-[#d0d0d0] text-center">Copies</div>
                  <div className="w-[52px] border-r border-[#d0d0d0] pr-[2px] text-center">Scale</div>
                </div>
                <div className="flex h-[19px] items-center font-['Noto_Sans',sans-serif] text-[10.3px]">
                  <div className="w-[147px] pl-px whitespace-nowrap">loubie_adalinda_dragon_d...</div>
                  <div className="w-[35px] text-center">1</div>
                  <div className="pl-[18px]">100%</div>
                </div>
              </div>

              <div className="mt-[1px] ml-[22px] text-[11.5px] leading-[14px] text-[#222]">Info</div>
              <div className="ml-[12px] flex h-[67px] w-[344px] rounded-[4px] border border-[#cecece] bg-[#d9d9d9] pt-[5px] pl-[9px] text-[11.5px] leading-[19px] tracking-[0.1px]">
                <div className="w-[165px]">
                  <div>Size:</div>
                  <div>Facets:</div>
                  <div>Manifold:</div>
                </div>
                <div>
                  <div>Volume:</div>
                  <div>Materials:</div>
                </div>
              </div>
            </div>
          </div>
        </div>
        <div className="mt-[10px] h-[2px] shrink-0 border-t border-[#b9b9b9] bg-white" />
      </div>

      {/* context menu */}
      <div className="absolute top-[693px] left-[654px] h-[304px] w-[257px] rounded-[4px] bg-[#f5f5f5] py-1 text-[13.5px] leading-5 tracking-[0.2px] shadow-[0_3px_10px_rgba(0,0,0,0.45)]">
        <MenuItem on icon={<Brick badge="minus" className="bg-[#ececec]" />} text="Delete" keys={<><Cmd /><ForwardDelete /></>} />
        <MenuItem icon={<PlusCircle />} text="Increase copies" keys={<><Cmd />+</>} />
        <MenuItem icon={<MinusCircle />} text="Decrease copies" keys={<><Cmd />-</>} />
        <MenuItem icon={<Field />} text="Set number of copies…" />
        <MenuSep />
        <MenuItem icon={<RotateCw />} text="Rotate 45° clockwise" />
        <MenuItem icon={<RotateCw className="-scale-x-100" />} text="Rotate 45° counter-clockwise" />
        <MenuItem icon={<Field />} text="Rotate" sub />
        <MenuItem icon={<FlipIcon />} text="Flip" sub />
        <MenuItem icon={<ScaleIcon />} text="Scale" sub />
        <MenuItem icon={<SplitIcon />} text="Split" />
        <MenuItem icon={<Box />} text="Cut…" />
        <MenuSep />
        <MenuItem icon={<Gear />} text="Settings…" />
        <MenuSep />
        <MenuItem icon={<Brick badge="arrow" />} text="Export object as STL…" />
      </div>

      {/* opened preset lists */}
      <Popup
        top="top-[124px]"
        rows={[
          { icon: <Gear />, text: "- default -" },
          { icon: <Gear />, text: "0.10mm DETAIL" },
          { icon: <Gear />, text: "0.20mm FLEX" },
          { icon: <Gear />, text: "0.20mm NORMAL", on: true },
          { icon: <Gear />, text: "0.25mm DRAFT" },
        ]}
      />
      <Popup
        top="top-[232px]"
        rows={[
          { icon: <Spool />, text: "- default -" },
          { icon: <Swatch c="bg-[#4f97d3]" />, text: "Fillamentum ABS 1.75mm" },
          { icon: <Swatch c="bg-[#4f97d3]" />, text: "Prusa ABS 1.75mm" },
          { icon: <Swatch c="bg-[#2ccc35]" />, text: "Prusa FLEX 1.75mm" },
          { icon: <Swatch c="bg-[#ffe056]" />, text: "Prusa HIPS 1.75mm" },
          { icon: <Swatch c="bg-[#c3f6ff]" />, text: "Prusa PET 1.75mm", on: true },
          { icon: <Swatch c="bg-[#ff50e6]" />, text: "Prusa PLA 1.75mm" },
        ]}
      />
      <Popup
        top="top-[378px]"
        rows={[
          { icon: <Printer />, text: "- default -" },
          { icon: <Printer />, text: "Prusa i3 1.75", on: true },
          { icon: <Printer />, text: "Prusa i3 1.75 FLEX" },
        ]}
      />

      <Leaders />
      {badges.map((b) => (
        <div
          key={b.n}
          className={
            b.at +
            " absolute flex size-[35px] items-center justify-center rounded-full border-[1.3px] border-[#444] bg-white font-['Roboto',sans-serif] text-[23px] leading-none font-bold"
          }
        >
          <span className="scale-x-[0.85] pt-px">{b.n}</span>
        </div>
      ))}
    </div>
  );
}
